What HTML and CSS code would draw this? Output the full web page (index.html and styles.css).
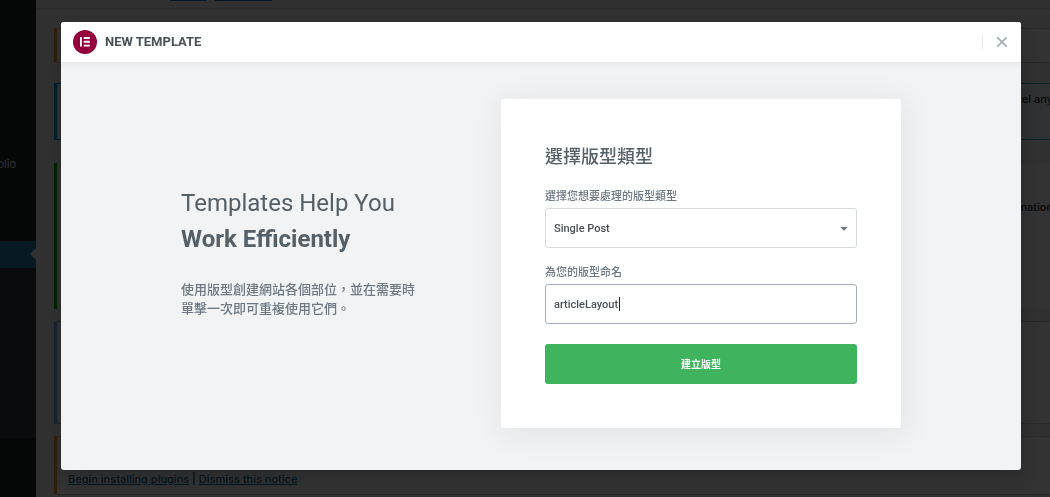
FILE: index.html
```html
<!DOCTYPE html>
<html lang="zh-Hant">
<head>
<meta charset="utf-8">
<meta name="viewport" content="width=device-width, initial-scale=1">
<title>New Template</title>
<link rel="stylesheet" href="styles.css">
</head>
<body>
<div class="admin">
  <nav class="sidebar">
    <a class="sidebar-link" href="#">olio</a>
    <div class="sidebar-current"></div>
    <div class="sidebar-submenu"></div>
  </nav>
  <main class="content">
    <div class="toolbar"><span class="toolbar-tab"></span><span class="toolbar-tab toolbar-tab-wide"></span></div>
    <div class="notices">
      <div class="notice notice-warning notice-short"></div>
      <div class="notice notice-info"><span>cel any</span></div>
      <div class="notice notice-success"><span>mation</span></div>
      <div class="notice notice-light"></div>
      <div class="notice notice-warning notice-actions"><p><a href="#">Begin installing plugins</a> | <a href="#">Dismiss this notice</a></p></div>
    </div>
  </main>
</div>

<div class="overlay">
  <section class="modal" role="dialog" aria-labelledby="modal-title">
    <header class="modal-header">
      <svg class="logo" viewBox="0 0 24 24" aria-hidden="true">
        <circle cx="12" cy="12" r="12" fill="#93003c"/>
        <path d="M7 7h1.900v9.600H7zM10.700 7h6.100v1.900h-6.100zM10.700 10.850h6.100v1.900h-6.100zM10.700 14.700h6.100v1.900h-6.100z" fill="#fff"/>
      </svg>
      <h1 class="modal-title" id="modal-title">NEW TEMPLATE</h1>
      <button class="close" type="button" aria-label="Close">
        <svg viewBox="0 0 12 12" aria-hidden="true"><path d="M1.300 1.300l9.400 9.400M10.700 1.300l-9.400 9.400" fill="none" stroke="#a4afb7" stroke-width="1.800"/></svg>
      </button>
    </header>
    <div class="modal-body">
      <div class="intro">
        <h2 class="intro-title">Templates Help You<br><strong>Work Efficiently</strong></h2>
        <p class="intro-text">使用版型創建網站各個部位，並在需要時單擊一次即可重複使用它們。</p>
      </div>
      <form class="card">
        <h3 class="card-title">選擇版型類型</h3>
        <label class="label" for="type">選擇您想要處理的版型類型</label>
        <div class="field">
          <select class="control" id="type"><option>Single Post</option></select>
          <svg class="arrow" viewBox="0 0 8 4" aria-hidden="true"><path d="M0.500 0h7L4 4z" fill="#6d7882"/></svg>
        </div>
        <label class="label" for="name">為您的版型命名</label>
        <div class="field">
          <input class="control control-active" id="name" type="text" value="articleLayout">
          <span class="caret"></span>
        </div>
        <button class="submit" type="button">建立版型</button>
      </form>
    </div>
  </section>
</div>
</body>
</html>
```
FILE: styles.css
```css
* {
  box-sizing: border-box;
}

body {
  margin: 0;
  font-family: Roboto, "Noto Sans CJK TC", sans-serif;
  color: #495157;
}

h1, h2, h3, p {
  margin: 0;
}

.admin {
  display: grid;
  grid-template-columns: 36px 1fr;
  height: 100vh;
  overflow: hidden;
  font-family: Inter, sans-serif;
  font-size: 11px;
}

.sidebar {
  display: flex;
  flex-direction: column;
  background: #1d2327;
  overflow: hidden;
}

.sidebar-link {
  display: flex;
  justify-content: flex-end;
  margin-top: 156px;
  padding-right: 20px;
  line-height: 16px;
  color: #eee;
  text-decoration: none;
}

.sidebar-current {
  position: relative;
  height: 27px;
  margin-top: 69px;
  background: #1f78a4;
}

.sidebar-current::after {
  content: "";
  position: absolute;
  right: 0;
  top: 7px;
  border: 6px solid transparent;
  border-left: 0;
  border-right-color: #f1f1f1;
}

.sidebar-submenu {
  height: 170px;
  background: #32373c;
}

.content {
  background: #f1f1f1;
  overflow: hidden;
}

.toolbar {
  display: flex;
  gap: 8px;
  height: 9px;
  padding-left: 134px;
  border-bottom: 1px solid #d5d8dc;
}

.toolbar-tab {
  width: 37px;
  height: 1px;
  background: #0073ba;
}

.toolbar-tab-wide {
  width: 57px;
}

.notices {
  padding: 19px 0 0 18px;
}

.notice {
  display: flex;
  justify-content: flex-end;
  border: 1px solid #c3c4c7;
  border-left: 3px solid;
  border-right: 0;
  background: #fff;
  color: #23282d;
  font-weight: 500;
  line-height: 16px;
}

.notice span {
  margin-right: -3px;
}

.notice-warning {
  border-left-color: #dba040;
}

.notice-short {
  height: 35px;
}

.notice-info {
  height: 57px;
  margin-top: 20px;
  padding-top: 7px;
  border-color: #00a0d2;
  background: #eef5ff;
}

.notice-success {
  height: 146px;
  margin-top: 23px;
  padding-top: 36px;
  border-color: #00a32a;
  border-top: 0;
  border-bottom: 0;
}

.notice-light {
  height: 103px;
  margin-top: 12px;
  border-left-color: #72aee6;
}

.notice-actions {
  justify-content: flex-start;
  height: 59px;
  margin-top: 12px;
  padding: 34px 0 0 11px;
}

.notice-actions a {
  color: #1a6a9c;
}

.overlay {
  position: fixed;
  inset: 0;
  display: flex;
  align-items: flex-start;
  padding: 22px 29px 27px 61px;
  background: rgba(0, 0, 0, 0.8);
}

.modal {
  flex: 1;
  background: #f1f3f5;
  border-radius: 3px;
  box-shadow: 2px 8px 23px 3px rgba(0, 0, 0, 0.2);
  overflow: hidden;
}

.modal-header {
  position: relative;
  display: flex;
  align-items: center;
  gap: 8px;
  height: 40px;
  padding: 0 12px;
  background: #fff;
  box-shadow: 0 0 8px rgba(0, 0, 0, 0.1);
}

.logo {
  width: 24px;
  height: 24px;
}

.modal-title {
  font-size: 13px;
  font-weight: 700;
  line-height: 16px;
}

.close {
  display: flex;
  align-items: center;
  justify-content: flex-end;
  width: 27px;
  height: 14px;
  margin-left: auto;
  padding: 0 1px 0 0;
  border: 0;
  border-left: 1px solid #e6e9ec;
  background: none;
}

.close svg {
  width: 12px;
  height: 12px;
}

.modal-body {
  display: flex;
  align-items: center;
  justify-content: space-between;
  padding: 37px 120px 42px;
}

.intro {
  width: 240px;
  padding-bottom: 24px;
}

.intro-title {
  font-size: 24px;
  font-weight: 400;
  line-height: 36px;
  color: #556068;
  white-space: nowrap;
}

.intro-title strong {
  font-weight: 700;
}

.intro-text {
  margin-top: 23px;
  font-size: 13px;
  font-weight: 500;
  line-height: 19px;
  color: #6d7882;
}

.card {
  width: 400px;
  padding: 44px;
  background: #fff;
  border-radius: 2px;
  box-shadow: 2px 4px 30px 4px rgba(0, 0, 0, 0.06);
}

.card-title {
  margin-bottom: 18px;
  font-size: 18px;
  font-weight: 500;
  line-height: 28px;
  color: #556068;
}

.label {
  display: block;
  margin-bottom: 3px;
  font-size: 11px;
  font-weight: 500;
  line-height: 16px;
  color: #6d7882;
}

.field {
  position: relative;
  display: flex;
  margin-bottom: 17px;
}

.control {
  width: 100%;
  height: 40px;
  padding: 0 8px;
  border: 1px solid #d5dadf;
  border-radius: 3px;
  outline: 0;
  appearance: none;
  background: #fff;
  color: #495157;
  font-family: inherit;
  font-size: 11px;
  font-weight: 500;
}

.control-active {
  border-color: #a4afb7;
}

.arrow {
  position: absolute;
  right: 9px;
  top: 19px;
  width: 8px;
  height: 4px;
}

.caret {
  position: absolute;
  left: 74px;
  top: 13px;
  width: 1px;
  height: 14px;
  background: #23282d;
}

.submit {
  width: 100%;
  height: 40px;
  margin-top: 3px;
  padding-bottom: 3px;
  border: 0;
  border-radius: 3px;
  background: #3fb35d;
  color: #fff;
  font-family: inherit;
  font-size: 10px;
  font-weight: 700;
}
```
